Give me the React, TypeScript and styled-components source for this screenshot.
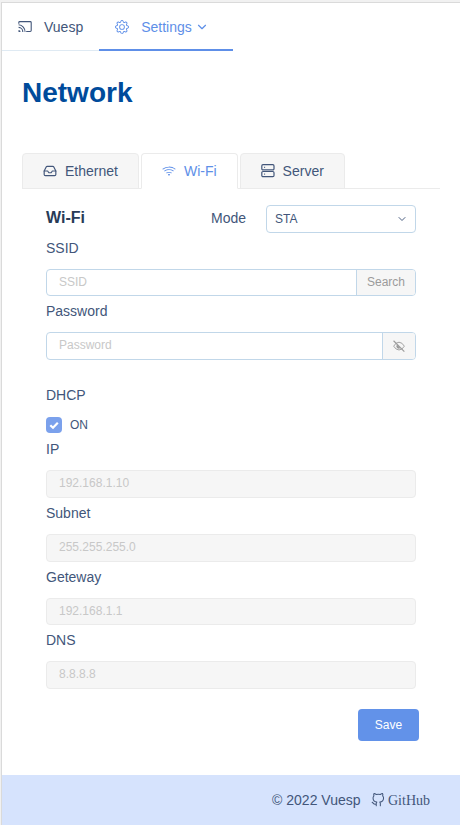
import React from 'react';
import styled, { createGlobalStyle, css } from 'styled-components';
import { BsGear, BsWifi } from 'react-icons/bs';
import { FiInbox, FiGithub, FiChevronDown } from 'react-icons/fi';

const color = {
  text: '#42567a',
  primary: '#5e8fe8',
  border: '#c1d7e9',
  muted: '#ebebeb',
  fill: '#f6f6f6',
  placeholder: '#c8c8c8',
};

const GlobalStyle = createGlobalStyle`
  *, *::before, *::after { box-sizing: border-box; }
  body {
    margin: 0;
    background: #f1f1f1;
    color: ${color.text};
    font-family: "Liberation Sans", Arial, sans-serif;
    font-size: 14px;
  }
`;

const Window = styled.div`
  display: flex;
  flex-direction: column;
  height: 823px;
  margin-top: 2px;
  margin-left: 1px;
  background: #fff;
  border-top: 1px solid #dadada;
  border-left: 1px solid #dadada;
  overflow: hidden;
`;

const Nav = styled.nav`
  display: flex;
  height: 48px;
`;

const NavItem = styled.a<{ $active?: boolean }>`
  display: flex;
  align-items: center;
  height: 48px;
  padding: ${p => (p.$active ? '2px 23.7px 0 16px' : '0 16px')};
  border-bottom: ${p => (p.$active ? `2px solid ${color.primary}` : '1px solid #dfeaf3')};
  color: ${p => (p.$active ? color.primary : color.text)};
  svg:first-child { margin-right: 12px; }
  svg:nth-child(3) { margin-left: 3.5px; }
  span { line-height: 20px; }
`;

const Title = styled.h1`
  margin: 25px 0 0 20px;
  height: 36px;
  font-size: 28px;
  line-height: 34px;
  color: #004b9b;
`;

const Tabs = styled.div`
  display: flex;
  gap: 2px;
  height: 36px;
  margin: 41px 20px 0;
  box-shadow: inset 0 -1px ${color.muted};
`;

const Tab = styled.button<{ $active?: boolean }>`
  display: flex;
  align-items: center;
  gap: 8px;
  height: 36px;
  padding: 0 20px;
  border: 1px solid ${color.muted};
  border-radius: 4px 4px 0 0;
  background: ${color.fill};
  color: inherit;
  font: inherit;
  line-height: 20px;
  ${p => p.$active && css`
    background: #fff;
    border-bottom-color: #fff;
    color: ${color.primary};
  `}
`;

const Panel = styled.form`
  width: 370px;
  margin: 16px 0 0 44px;
`;

const PanelHead = styled.div`
  display: flex;
  align-items: center;
  height: 27.8px;
  h2 {
    flex: 1;
    margin: 0;
    font-size: 16px;
    line-height: 24px;
    padding-bottom: 2px;
    color: #283b57;
  }
  span { margin-right: 20px; padding-bottom: 2px; }
`;

const Select = styled.div`
  display: flex;
  align-items: center;
  justify-content: space-between;
  width: 150px;
  height: 28px;
  padding: 0 7px 0 8px;
  border: 1px solid ${color.border};
  border-radius: 4px;
  font-size: 12px;
`;

const Field = styled.label`
  display: block;
  height: 63.6px;
`;

const Label = styled.div`
  height: 36px;
  line-height: 30px;
`;

const InputGroup = styled.div<{ $disabled?: boolean }>`
  display: flex;
  height: 27.6px;
  border: 1px solid ${p => (p.$disabled ? color.muted : color.border)};
  border-radius: 4px;
  background: ${p => (p.$disabled ? color.fill : '#fff')};
  overflow: hidden;
`;

const Input = styled.input`
  flex: 1;
  min-width: 0;
  padding: 0 12px 1.6px;
  border: 0;
  outline: 0;
  background: transparent;
  font: 12px "Liberation Sans", Arial, sans-serif;
  &::placeholder { color: ${color.placeholder}; opacity: 1; }
`;

const Addon = styled.span`
  display: flex;
  align-items: center;
  padding: 0 10px 1px;
  border-left: 1px solid ${color.border};
  background: ${color.fill};
  color: #9b9b9b;
  font-size: 12px;
`;

const Toggle = styled.div`
  height: 54.5px;
  margin-top: 20px;
`;

const CheckRow = styled.div`
  display: flex;
  align-items: center;
  gap: 8px;
  height: 18px;
  font-size: 12px;
`;

const CheckBox = styled.span`
  display: grid;
  place-items: center;
  width: 16px;
  height: 16px;
  border-radius: 4px;
  background: #7ba1ec;
`;

const Save = styled.button`
  display: block;
  width: 61px;
  height: 32px;
  margin: 20px -3px 0 auto;
  border: 0;
  border-radius: 4px;
  background: #6292e9;
  color: #fff;
  font: 12px "Liberation Sans", Arial, sans-serif;
`;

const Footer = styled.footer`
  display: flex;
  align-items: center;
  justify-content: flex-end;
  height: 50px;
  margin-top: auto;
  padding-right: 30px;
  background: #d6e3fd;
`;

const GitHubLink = styled.a`
  display: flex;
  align-items: center;
  gap: 3px;
  margin-left: 10.5px;
  font-family: "Liberation Serif", "Times New Roman", serif;
  span { padding-top: 2px; }
`;

const CastIcon = () => (
  <svg width="14" height="14" viewBox="0 0 14 14" fill="none" stroke="currentColor" strokeWidth="1.1">
    <path d="M.8 3.8V2.5Q.8 1.6 1.7 1.6H12.2Q13.2 1.6 13.2 2.5V10.6Q13.2 11.5 12.2 11.5H8.2M.6 4.8A6.7 6.7 0 0 1 7 11.9M.6 7.4A4.4 4.4 0 0 1 4.8 11.9" />
    <path d="M.5 9.9A2.1 2.1 0 0 1 2.6 12H.5Z" fill="currentColor" stroke="none" />
  </svg>
);

const ServerIcon = () => (
  <svg width="14" height="14" viewBox="0 0 14 14" fill="none" stroke="currentColor" strokeWidth="1.2">
    <rect x=".8" y=".7" width="12.2" height="5.2" rx="1.2" />
    <rect x=".8" y="7.5" width="12.2" height="5.2" rx="1.2" />
    <path d="M3.2 3.3H4.1M3.2 10.1H4.1" />
  </svg>
);

const HiddenIcon = () => (
  <svg width="12" height="12" viewBox="0 0 13 13" fill="none" stroke="currentColor">
    <path d="M.7 6.7Q3.2 2.4 6.5 2.4T12.3 6.7Q9.8 10.8 6.5 10.8T.7 6.7Z" />
    <path d="M4.4 5A2.4 2.4 0 0 0 8 8.6Z" fill="currentColor" stroke="none" />
    <path d="M.6.8 12.3 12.5" strokeWidth="1.2" />
  </svg>
);

const disabledFields = [
  ['IP', '192.168.1.10'],
  ['Subnet', '255.255.255.0'],
  ['Geteway', '192.168.1.1'],
  ['DNS', '8.8.8.8'],
];

export default function App() {
  return (
    <>
      <GlobalStyle />
      <Window>
        <Nav>
          <NavItem><CastIcon /><span>Vuesp</span></NavItem>
          <NavItem $active><BsGear size={14} /><span>Settings</span><FiChevronDown size={14} strokeWidth={2} /></NavItem>
        </Nav>
        <Title>Network</Title>
        <Tabs>
          <Tab><FiInbox size={14} strokeWidth={2} />Ethernet</Tab>
          <Tab $active><BsWifi size={14} />Wi-Fi</Tab>
          <Tab><ServerIcon />Server</Tab>
        </Tabs>
        <Panel>
          <PanelHead>
            <h2>Wi-Fi</h2>
            <span>Mode</span>
            <Select>STA<FiChevronDown size={12} strokeWidth={1.9} /></Select>
          </PanelHead>
          <Field>
            <Label>SSID</Label>
            <InputGroup><Input placeholder="SSID" /><Addon>Search</Addon></InputGroup>
          </Field>
          <Field>
            <Label>Password</Label>
            <InputGroup>
              <Input placeholder="Password" />
              <Addon><HiddenIcon /></Addon>
            </InputGroup>
          </Field>
          <Toggle>
            <Label>DHCP</Label>
            <CheckRow>
              <CheckBox>
                <svg width="10" height="10" viewBox="0 0 10 10">
                  <path d="M1.3 5.2 4 7.8 8.8 2.8" fill="none" stroke="#fff" strokeWidth="2.2" />
                </svg>
              </CheckBox>
              ON
            </CheckRow>
          </Toggle>
          {disabledFields.map(([label, value]) => (
            <Field key={label}>
              <Label>{label}</Label>
              <InputGroup $disabled><Input disabled placeholder={value} /></InputGroup>
            </Field>
          ))}
          <Save type="button">Save</Save>
        </Panel>
        <Footer>
          <span>© 2022 Vuesp</span>
          <GitHubLink><FiGithub size={14} strokeWidth={1.8} /><span>GitHub</span></GitHubLink>
        </Footer>
      </Window>
    </>
  );
}
